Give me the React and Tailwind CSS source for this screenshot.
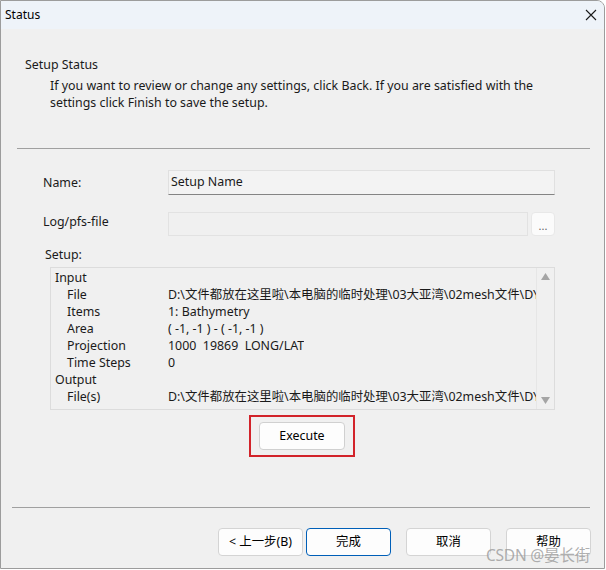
import React from 'react'

const FONT = { fontFamily: '"Noto Sans", "Noto Sans CJK SC", sans-serif' }

const rows = [
  { head: 'Input' },
  { label: 'File', value: 'D:\\文件都放在这里啦\\本电脑的临时处理\\03大亚湾\\02mesh文件\\DY\u2019' },
  { label: 'Items', value: '1: Bathymetry' },
  { label: 'Area', value: '( -1, -1 ) - ( -1, -1 )' },
  { label: 'Projection', value: '1000\u00a0\u00a019869\u00a0\u00a0LONG/LAT' },
  { label: 'Time Steps', value: '0' },
  { head: 'Output' },
  { label: 'File(s)', value: 'D:\\文件都放在这里啦\\本电脑的临时处理\\03大亚湾\\02mesh文件\\DY\u2019' },
]

function DialogButton({ children, primary }) {
  return (
    <button
      className={
        primary
          ? 'w-[85px] h-[28px] rounded-[4px] border border-[#005fb8] bg-[#fdfdfd] text-[12.4px] text-black'
          : 'w-[85px] h-[28px] rounded-[4px] border border-[#d4d4d4] bg-[#fdfdfd] text-[12.4px] text-black'
      }
    >
      {children}
    </button>
  )
}

export default function App() {
  return (
    <div className="w-[606px] h-[570px] bg-white text-[12.4px] text-[#1a1a1a]" style={FONT}>
      <div className="relative w-[605px] h-[569px] border border-[#9c9c9c] rounded-tr-[8px] overflow-hidden bg-[#f0f0f0] flex flex-col">

        {/* title bar */}
        <div className="h-[28px] bg-[#eef3f9] flex items-center justify-between pl-[4px] pr-[7px]">
          <span className="text-[12px] text-black">Status</span>
          <svg width="12" height="12" viewBox="0 0 12 12" className="mb-[1px]">
            <path d="M1 1 L11 11 M11 1 L1 11" stroke="#1a1a1a" strokeWidth="1.1" />
          </svg>
        </div>

        {/* header */}
        <div className="pl-[24px] pt-[27px] leading-[17px]">
          <div>Setup Status</div>
          <div className="pl-[25px] pt-[4px] pr-[55px]">
            If you want to review or change any settings, click Back. If you are satisfied with the settings click Finish to save the setup.
          </div>
        </div>

        <div className="mt-[37px] ml-[16px] mr-[14px] h-px bg-[#a0a0a0]" />

        {/* form */}
        <div className="pl-[42px] pr-[49px]">
          <div className="mt-[21px] flex items-center">
            <span className="w-[125px] pt-[2px]">Name:</span>
            <div className="flex-1 h-[25px] border border-[#e0e0e0] border-b-[#848484] bg-[#f3f3f3] pl-[2px] leading-[21px]">
              Setup Name
            </div>
          </div>

          <div className="mt-[17px] flex items-center">
            <span className="w-[125px] pb-[3px]">Log/pfs-file</span>
            <div className="flex-1 h-[24px] border border-[#e2e2e2] bg-[#f0f0f0]" />
            <div className="ml-[3px] w-[24px] h-[24px] rounded-[4px] border border-[#e8e8e8] bg-[#fbfbfb] flex items-center justify-center text-[#666] text-[11px] leading-none pt-[2px]">
              ...
            </div>
          </div>

          <div className="mt-[10px] pl-[2px] leading-[17px]">Setup:</div>

          <div className="mt-[4px] ml-[7px] h-[143px] border border-[#dcdcdc] flex">
            <div className="flex-1 min-w-0 pl-[4px] pt-[1px] leading-[17px] overflow-hidden">
              {rows.map((r, i) =>
                r.head ? (
                  <div key={i}>{r.head}</div>
                ) : (
                  <div key={i} className="flex whitespace-nowrap">
                    <span className="w-[113px] pl-[12px] shrink-0">{r.label}</span>
                    <span className="overflow-hidden">{r.value}</span>
                  </div>
                )
              )}
            </div>
            <div className="w-[18px] border-l border-[#e6e6e6] flex flex-col items-center justify-between py-[5px]">
              <svg width="9" height="7" viewBox="0 0 9 7"><path d="M4.5 0 L9 7 L0 7 Z" fill="#a5a5a5" /></svg>
              <svg width="9" height="7" viewBox="0 0 9 7"><path d="M0 0 L9 0 L4.5 7 Z" fill="#a5a5a5" /></svg>
            </div>
          </div>

          <div className="mt-[5px] flex justify-center pl-[6px]">
            <div className="w-[106px] h-[42px] border-2 border-[#d2232a] flex items-center justify-center">
              <button className="w-[86px] h-[28px] rounded-[4px] border border-[#d0d0d0] bg-[#fdfdfd] text-[12.4px] text-black">
                Execute
              </button>
            </div>
          </div>
        </div>

        <div className="mt-[50px] ml-[11px] mr-[14px] h-px bg-[#a0a0a0]" />

        {/* footer buttons */}
        <div className="mt-[20px] flex justify-end pr-[13px]">
          <DialogButton>&lt; 上一步(B)</DialogButton>
          <div className="ml-[3px]"><DialogButton primary>完成</DialogButton></div>
          <div className="ml-[15px]"><DialogButton>取消</DialogButton></div>
          <div className="ml-[15px]"><DialogButton>帮助</DialogButton></div>
        </div>

        {/* watermark */}
        <span className="absolute right-[14px] bottom-[5px] text-[15.5px] text-[#9a9a9a]/80 leading-none tracking-[-0.2px]">
          CSDN @晏长街
        </span>
      </div>
    </div>
  )
}
